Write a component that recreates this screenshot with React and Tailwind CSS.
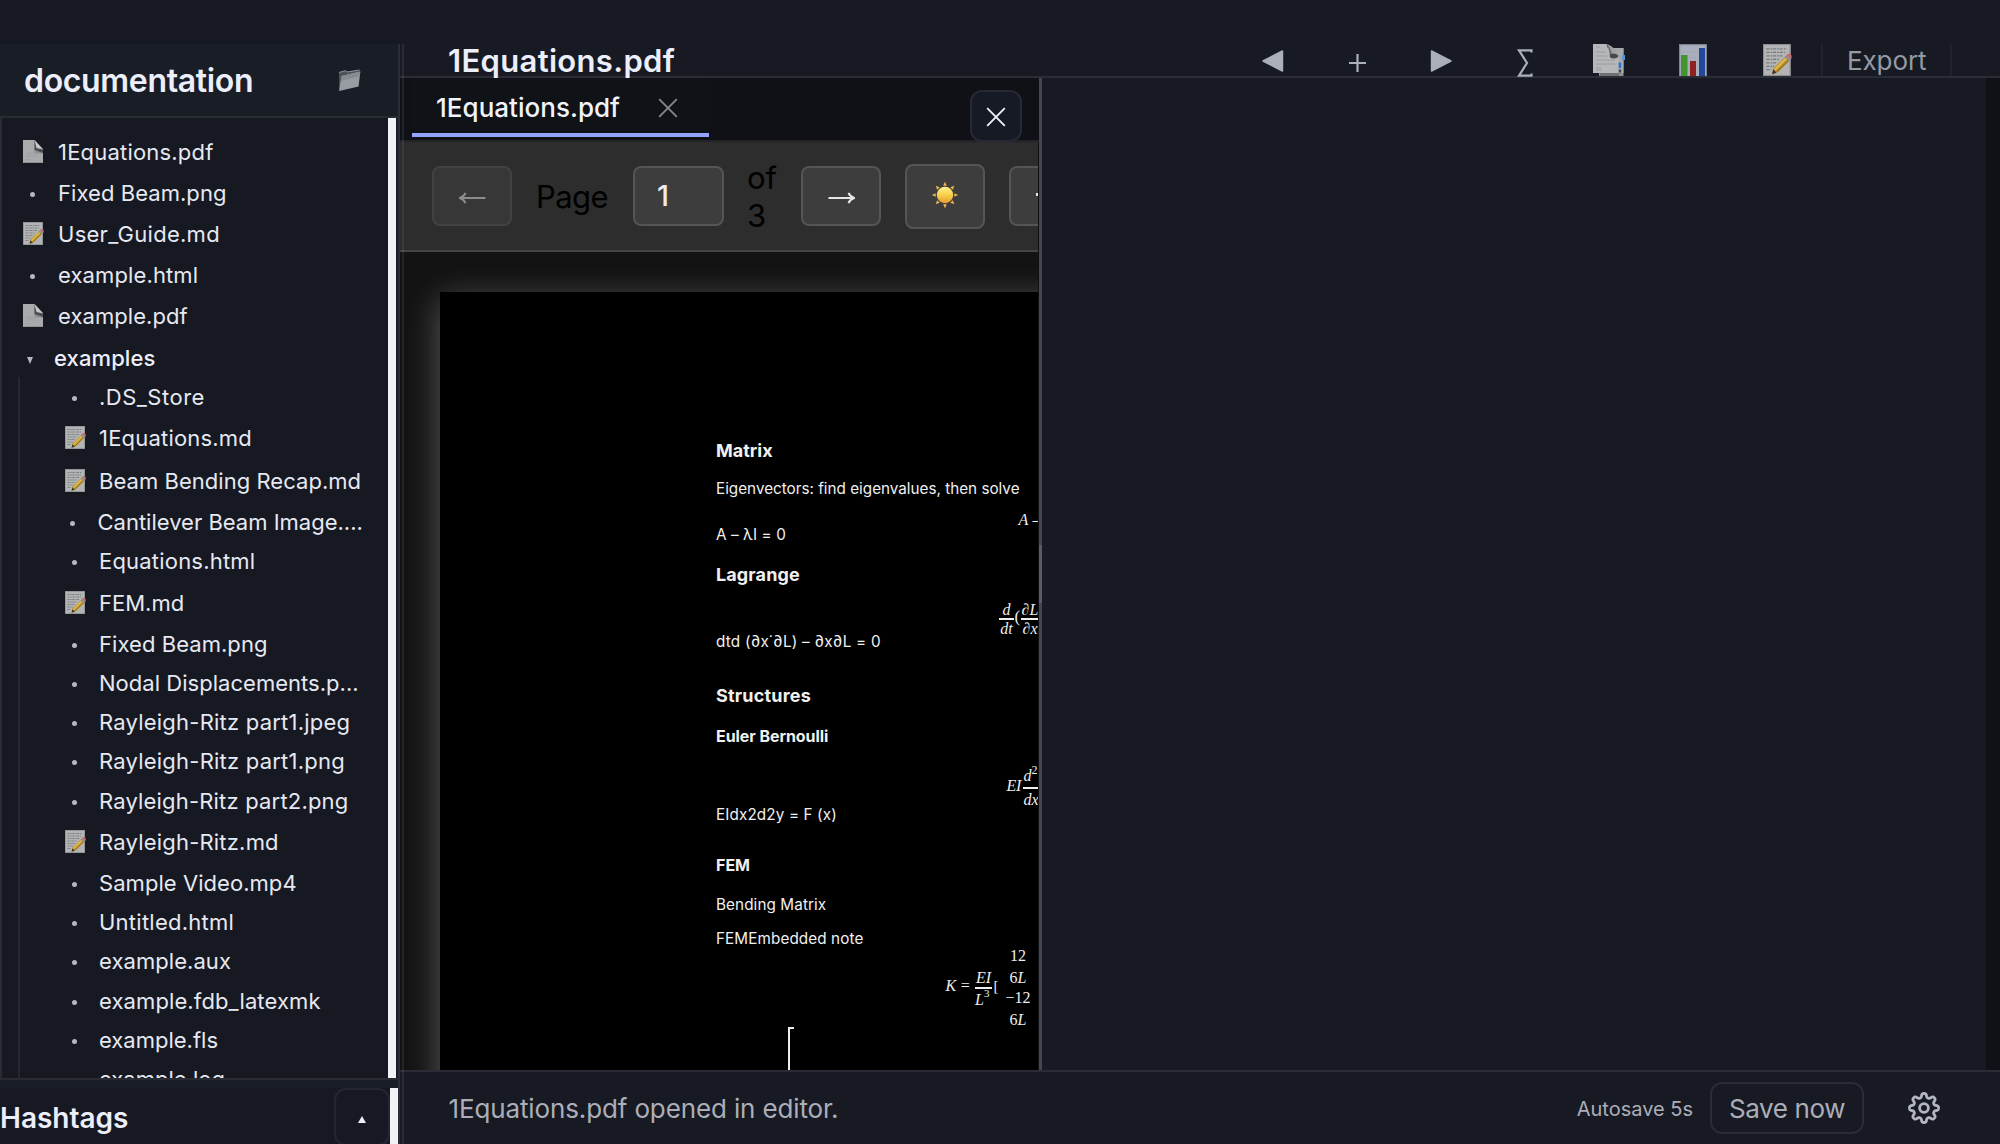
import React from 'react';

const files = [
  { name: '1Equations.pdf', icon: 'doc', row: 'h-[41px]', ls: 'tracking-[0.2px]' },
  { name: 'Fixed Beam.png', row: 'h-[41px]', ls: 'tracking-[0.06px]' },
  { name: 'User_Guide.md', icon: 'memo', row: 'h-[41px]', ls: 'tracking-[0.27px]' },
  { name: 'example.html', row: 'h-[41px]', ls: 'tracking-[0.12px]' },
  { name: 'example.pdf', icon: 'doc', row: 'h-[42px]', ls: 'tracking-[0.06px]' },
];

const examples = [
  { name: '.DS_Store', row: 'h-[41px]', ls: 'tracking-[0.5px]' },
  { name: '1Equations.md', icon: 'memo', row: 'h-[43px]', ls: 'tracking-[0.2px]' },
  { name: 'Beam Bending Recap.md', icon: 'memo', row: 'h-[41px]', ls: 'tracking-[0.04px]' },
  { name: 'Cantilever Beam Image....', row: 'h-[39px]', ls: 'tracking-[0px]', shift: true },
  { name: 'Equations.html', row: 'h-[42px]', ls: 'tracking-[0.2px]' },
  { name: 'FEM.md', icon: 'memo', row: 'h-[41px]', ls: 'tracking-[0px]' },
  { name: 'Fixed Beam.png', row: 'h-[39px]', ls: 'tracking-[0.06px]' },
  { name: 'Nodal Displacements.p...', row: 'h-[39px]', ls: 'tracking-[0.03px]' },
  { name: 'Rayleigh-Ritz part1.jpeg', row: 'h-[39px]', ls: 'tracking-[0.22px]' },
  { name: 'Rayleigh-Ritz part1.png', row: 'h-[40px]', ls: 'tracking-[0.22px]' },
  { name: 'Rayleigh-Ritz part2.png', row: 'h-[41px]', ls: 'tracking-[0.18px]' },
  { name: 'Rayleigh-Ritz.md', icon: 'memo', row: 'h-[41px]', ls: 'tracking-[0.2px]' },
  { name: 'Sample Video.mp4', row: 'h-[39px]', ls: 'tracking-[0.05px]' },
  { name: 'Untitled.html', row: 'h-[39px]', ls: 'tracking-[0.25px]' },
  { name: 'example.aux', row: 'h-[40px]', ls: 'tracking-[0.06px]' },
  { name: 'example.fdb_latexmk', row: 'h-[39px]', ls: 'tracking-[0.11px]' },
  { name: 'example.fls', row: 'h-[39px]', ls: 'tracking-[0px]' },
  { name: 'example.log', row: 'h-[40px]', ls: 'tracking-[0px]' },
];

function DocIcon() {
  return (
    <svg width="20" height="23" viewBox="0 0 20 23">
      <path d="M0 0H11.5L20 9V23H0Z" fill="#a9aaac" />
      <path d="M0.5 22.5H19.5" stroke="#8f9092" />
      <path d="M11.5 3V13.5H20V10Z" fill="#8f9092" />
      <path d="M11.5 0L20 9.5V13L11.5 10Z" fill="#4b4d50" />
      <path d="M11.5 0L20 9.5L13.5 8Z" fill="#c6c7c9" />
      <path d="M3 13.5H16M3 16H15M3 19.5H7" stroke="#9b9c9e" strokeWidth="0.8" />
    </svg>
  );
}

function MemoIcon({ width = 21, height = 23 }) {
  return (
    <svg width={width} height={height} viewBox="0 0 21 23" preserveAspectRatio="none">
      <rect x="0" y="0" width="20" height="23" fill="#b3b4b5" />
      <rect x="0.4" y="0.4" width="19.2" height="22.2" fill="none" stroke="#8e8f91" strokeWidth="0.8" />
      <path
        d="M2.5 3.5H17M2.5 6H16M2.5 8.5H14M2.5 11H12M2.5 13.5H10M2.5 16H8M2.5 18.5H6"
        stroke="#77787a"
        strokeWidth="0.9"
        strokeDasharray="2.2 0.8 1.2 0.6"
      />
      <path d="M6.5 21.7L7.7 17.2L16 9L19.2 12L11 20.2Z" fill="#c39b34" />
      <path d="M8.5 18.6L17 10" stroke="#e0be58" strokeWidth="1.1" />
      <path d="M9.8 20.2L18.6 11.6" stroke="#8f6a1d" strokeWidth="0.9" />
      <path d="M6.5 21.7L7.5 18.2L9.8 20.7Z" fill="#3c3328" />
      <path d="M15.4 9.4L17 7.9L20.3 11L18.8 12.5Z" fill="#8d9096" />
      <path d="M17 7.9Q18.2 6.6 20 7.2Q21.4 8.6 20.3 11Z" fill="#c3686b" />
    </svg>
  );
}

function FolderIcon() {
  return (
    <svg width="23" height="23" viewBox="0 0 23 23">
      <path d="M1 3.5L7.5 1.6L9 3L21 0.8L22 2.5L20 14L1 21Z" fill="#4d5259" />
      <path d="M1 3.5L7.5 1.6L9 3L21.5 1" fill="none" stroke="#8b9299" strokeWidth="1" />
      <path d="M3.5 7L22.3 2.6L20.6 17.4L1.2 22Z" fill="#989ca2" />
      <path d="M3.5 7L22.3 2.6L21.8 7L3 12Z" fill="#868b92" />
    </svg>
  );
}

function TabsIcon() {
  return (
    <svg width="33" height="32" viewBox="0 0 33 32">
      <rect x="6" y="4" width="24.5" height="28" fill="#8d8f91" />
      <path d="M7 30.5H26" stroke="#6f7072" strokeWidth="3" />
      <path d="M16 4H30.5V29H25Z" fill="#a6a8aa" />
      <path d="M0 0H13.5L17 10L25.5 14V29H0Z" fill="#b6b7b8" />
      <path d="M13.5 0Q16 3 16.8 10Q21 8.5 25 11Q22.5 4.5 17 1.5Q15 0.4 13.5 0Z" fill="#a0a2a4" />
      <path d="M13.5 0Q16 3 16.8 10L18.6 9.6Q18 3.5 13.5 0Z" fill="#6a6c6f" />
      <path d="M16.8 10Q22 8.4 25.3 11.5Q25 14.4 21 14.6Q18 14.6 16.8 13Z" fill="#47494c" />
      <path d="M3 3H7M3 8H13M3 12H14M3 16H22M3 20H22M3 24H8M3 26H9" stroke="#989a9c" strokeWidth="0.9" />
      <rect x="29" y="11" width="3" height="5" fill="#5d93d6" />
      <rect x="25.7" y="18.5" width="2.4" height="5.5" fill="#2f6fd0" />
      <rect x="25.7" y="25.5" width="2.4" height="3" fill="#3d4553" />
    </svg>
  );
}

function ChartIcon() {
  return (
    <svg width="28" height="32" viewBox="0 0 28 32">
      <rect width="28" height="32" fill="#a9b0bd" />
      <rect x="0.6" y="0.6" width="26.8" height="32" fill="none" stroke="#7f858f" strokeWidth="1.2" />
      <path d="M2 8H26M2 14H26M2 20H26M2 26H26" stroke="#9da5b2" strokeWidth="0.7" />
      <rect x="2" y="11" width="6.5" height="21" fill="#43942f" />
      <rect x="11" y="17" width="6" height="15" fill="#8f2220" />
      <rect x="20" y="4" width="6" height="28" fill="#23489a" />
    </svg>
  );
}

function SunIcon() {
  return (
    <svg width="28" height="28" viewBox="-14 -14 28 28">
      <defs>
        <linearGradient id="sun" x1="0" y1="0" x2="0" y2="1">
          <stop offset="0" stopColor="#fdf08a" />
          <stop offset="0.5" stopColor="#f6cf4a" />
          <stop offset="1" stopColor="#ea9a33" />
        </linearGradient>
      </defs>
      {[0, 45, 90, 135, 180, 225, 270, 315].map((a) => (
        <path key={a} d="M-1.8 -9.3L0 -13.2L1.8 -9.3Z" fill="#f0b44a" transform={`rotate(${a})`} />
      ))}
      <circle r="8.2" fill="url(#sun)" />
    </svg>
  );
}

function Cross({ color }) {
  return (
    <svg width="20" height="20" viewBox="0 0 20 20">
      <path d="M1.2 1.2L18.8 18.8M18.8 1.2L1.2 18.8" stroke={color} strokeWidth="1.9" fill="none" />
    </svg>
  );
}

function Arrow({ color, flip }) {
  return (
    <svg width="27" height="12" viewBox="0 0 27 12" className={flip ? 'rotate-180' : ''}>
      <path d="M0.5 6H25" stroke={color} strokeWidth="2" />
      <path d="M20.5 0.9Q22 4.6 26.2 6Q22 7.4 20.5 11.1" stroke={color} strokeWidth="2" fill="none" />
    </svg>
  );
}

const gearPath = (() => {
  const pts = [];
  for (let i = 0; i < 240; i++) {
    const t = (i / 240) * Math.PI * 2;
    const r = 12.6 + (1.9 * Math.tanh(1.8 * Math.cos(8 * t))) / Math.tanh(1.8);
    pts.push(`${(r * Math.cos(t)).toFixed(2)} ${(r * Math.sin(t)).toFixed(2)}`);
  }
  return `M${pts.join('L')}Z`;
})();

function Gear() {
  return (
    <svg width="34" height="34" viewBox="-17 -17 34 34">
      <path d={gearPath} fill="none" stroke="#b3b6bf" strokeWidth="2.8" strokeLinejoin="round" />
      <circle r="4.4" fill="none" stroke="#b3b6bf" strokeWidth="2.8" />
    </svg>
  );
}

function FileRow({ file, nested }) {
  const pad = nested ? (file.shift ? 'pl-[59.5px]' : 'pl-[61px]') : 'pl-[20px]';
  return (
    <div className={`${file.row} ${pad} flex shrink-0 items-start`}>
      <div className="flex h-10 w-9 shrink-0 items-start">
        {file.icon === 'doc' && <div className="pt-2 pl-[0.5px]"><DocIcon /></div>}
        {file.icon === 'memo' && <div className={nested ? 'pt-2 pl-[1.5px]' : 'pt-2 pl-[0.5px]'}><MemoIcon /></div>}
        {!file.icon && (
          <div
            className={`mt-[19px] size-[5px] rounded-full bg-[#b4b7bf] ${nested ? 'ml-[8.5px]' : 'ml-[7.5px]'}`}
          />
        )}
      </div>
      <span className={`${file.ls} text-[22px] leading-10 whitespace-nowrap text-[#e6e8f2]`}>{file.name}</span>
    </div>
  );
}

function Sidebar() {
  return (
    <aside className="flex w-[400px] shrink-0 flex-col border-r-2 border-[#292e37] bg-[#191d26]">
      <div className="flex h-[74px] shrink-0 items-center justify-between border-b-2 border-[#292b33] pr-[37px] pl-6">
        <h1 className="pt-[2px] text-[32px] leading-none font-semibold tracking-[-0.33px] text-[#eceefb]">
          documentation
        </h1>
        <FolderIcon />
      </div>
      <div className="flex h-[962px] shrink-0 border-b-2 border-l-2 border-[#292b33]">
        <div className="flex w-[386px] flex-col overflow-hidden bg-[#161922] pt-[14px]">
          {files.map((f) => <FileRow key={f.name} file={f} />)}
          <div className="flex h-[39px] shrink-0 items-start pl-[25px]">
            <svg width="6" height="7" viewBox="0 0 6 7" className="mt-[18.5px]">
              <path d="M0 0H6L3 7Z" fill="#b4b7bf" />
            </svg>
            <span className="pl-[21px] text-[22px] leading-10 font-medium tracking-[0.1px] text-[#eceefb]">examples</span>
          </div>
          <div className="ml-4 flex flex-col border-l-2 border-[#262830]">
            <div className="-ml-[18px] flex flex-col">
              {examples.map((f) => <FileRow key={f.name} file={f} nested />)}
            </div>
          </div>
        </div>
        <div className="w-2 bg-[#f1f2f5]" />
      </div>
      <div className="mt-2 flex min-h-0 flex-1 bg-[#171922]">
        <div className="flex w-[390px] items-start justify-between overflow-hidden">
          <h2 className="pt-[13px] text-[28px] leading-[34px] font-semibold text-[#eceefb]">Hashtags</h2>
          <div className="flex h-[58px] w-14 shrink-0 items-center justify-center rounded-xl border-2 border-[#24272f]">
            <svg width="8" height="7" viewBox="0 0 8 7" className="mt-1">
              <path d="M4 0L8 7H0Z" fill="#eceefb" />
            </svg>
          </div>
        </div>
        <div className="w-2 bg-[#f1f2f5]" />
      </div>
    </aside>
  );
}

function TopBar() {
  return (
    <header className="flex h-[34px] shrink-0 items-center border-b-2 border-[#2a2d36] bg-[#171a23] pl-12">
      <div className="w-[783px] shrink-0 pt-[2px] text-[31px] leading-[32px] font-semibold tracking-[0.33px] text-[#eceefb]">
        1Equations.pdf
      </div>
      <div className="flex h-8 items-center">
        <div className="flex w-[84px] justify-center pt-[2px]">
          <svg width="22" height="22" viewBox="0 0 21 21">
            <path d="M19.5 1V20L1 10.5Z" fill="#abafb9" stroke="#abafb9" strokeWidth="1.5" strokeLinejoin="round" />
          </svg>
        </div>
        <div className="flex w-[84px] justify-center pt-[5px]">
          <svg width="17" height="18" viewBox="0 0 17 18">
            <path d="M0 9H17M8.5 0V18" stroke="#abafb9" strokeWidth="2.2" />
          </svg>
        </div>
        <div className="flex w-[84px] justify-center pt-[2px]">
          <svg width="22" height="22" viewBox="0 0 21 21">
            <path d="M1.5 1V20L20 10.5Z" fill="#abafb9" stroke="#abafb9" strokeWidth="1.5" strokeLinejoin="round" />
          </svg>
        </div>
        <div className="flex w-[84px] justify-center pt-[6px]">
          <svg width="16" height="28" viewBox="0 0 16 28">
            <path d="M14.5 3.5V1.4H2L10 14L2 26.6H14.5V24.5" fill="none" stroke="#abafb9" strokeWidth="2.2" />
          </svg>
        </div>
        <div className="flex w-[84px] justify-center"><TabsIcon /></div>
        <div className="flex w-[84px] justify-center"><ChartIcon /></div>
        <div className="flex w-[84px] justify-center"><MemoIcon width={29} height={32} /></div>
      </div>
      <div className="ml-[2px] flex h-8 w-[131px] items-center border-x-2 border-[#20232c] pt-[2px] pl-[24px] text-[26px] leading-none tracking-[-0.1px] text-[#9599a4]">
        Export
      </div>
    </header>
  );
}

function Frac({ top, bottom, className }) {
  return (
    <div className={`absolute flex flex-col items-center ${className}`}>
      <span className="h-[17px] leading-[18px]">{top}</span>
      <span className="h-[1.5px] w-full bg-[#eee]" />
      <span className="h-[18px] leading-[18px]">{bottom}</span>
    </div>
  );
}

function PdfPage() {
  return (
    <div className="relative mt-10 ml-10 h-[1200px] w-[900px] shrink-0 bg-black shadow-[0_8px_32px_rgba(255,255,255,0.3)]">
      <div className="flex flex-col pt-[149px] pl-[276px] text-[15.25px] leading-5 whitespace-nowrap text-[#f0f0f0]">
        <div className="h-[38px] text-lg leading-5 font-bold">Matrix</div>
        <div className="h-[46px]">Eigenvectors: find eigenvalues, then solve</div>
        <div className="h-[40px] tracking-[0.1px]">A – λI = 0</div>
        <div className="h-[67px] text-lg leading-5 font-bold tracking-[0.12px]">Lagrange</div>
        <div className="h-[54px] tracking-[0.22px]">dtd (∂x˙∂L) – ∂x∂L = 0</div>
        <div className="h-[40px] text-lg leading-5 font-bold tracking-[0.2px]">Structures</div>
        <div className="h-[79px] text-base leading-5 font-bold tracking-[-0.07px]">Euler Bernoulli</div>
        <div className="h-[50px] tracking-[0.13px]">EIdx2d2y = F (x)</div>
        <div className="h-[40px] text-base leading-5 font-bold">FEM</div>
        <div className="h-[34px] tracking-[0.1px]">Bending Matrix</div>
        <div className="tracking-[0.1px]">FEMEmbedded note</div>
      </div>
      <div className="absolute inset-0 font-['Liberation_Serif'] text-base leading-5 whitespace-nowrap text-[#eee] italic">
        <div className="absolute top-[218px] left-[578.5px] w-5 tracking-[0.2px]">A –</div>
        <Frac className="top-[309px] left-[559px] w-[15px]" top="d" bottom="dt" />
        <span className="absolute top-[315px] left-[574.5px] text-[17px] not-italic">(</span>
        <Frac className="top-[309px] left-[581px] w-[18px]" top="∂L" bottom="∂x" />
        <div className="absolute top-[484px] left-[566.5px] tracking-[-0.3px]">EI</div>
        <div className="absolute top-[474px] left-[583.5px]">
          d<sup className="relative -top-[7px] align-baseline text-[12px] leading-none not-italic">2</sup>
        </div>
        <div className="absolute top-[495px] left-[583px] h-[1.5px] w-[28px] bg-[#eee]" />
        <div className="absolute top-[498px] left-[583.5px]">dx</div>
        <div className="absolute top-[684px] left-[505.5px]">K <span className="-ml-[0.5px]">=</span></div>
        <div className="absolute top-[676px] left-[536px]">EI</div>
        <div className="absolute top-[695px] left-[535px] h-[1.5px] w-[17px] bg-[#eee]" />
        <div className="absolute top-[698px] left-[535px]">
          L<sup className="relative -top-[8px] align-baseline text-[11px] leading-none not-italic">3</sup>
        </div>
        <span className="absolute top-[684px] left-[553.5px] text-[15px] not-italic">[</span>
        <div className="absolute top-[654px] left-[565px] flex w-[26px] flex-col items-center not-italic">
          <span className="h-[22px]">12</span>
          <span className="h-[20px]">6<i>L</i></span>
          <span className="h-[22px]">−12</span>
          <span>6<i>L</i></span>
        </div>
        <div className="absolute top-[735px] left-[348px] h-[200px] w-[6px] border-t-2 border-l-2 border-[#eee]" />
      </div>
    </div>
  );
}

function PdfToolbar() {
  const btn = 'flex h-[60px] w-20 shrink-0 items-center justify-center rounded-lg border-2';
  return (
    <div className="flex h-[110px] w-[638px] shrink-0 items-center gap-6 overflow-hidden border-b-2 border-[#444444] bg-[#2d2d2d] pl-8 text-[31px] text-black">
      <div className={`${btn} border-[#424242] bg-[#373737]`}><div className="pt-1"><Arrow color="#8b8b8b" flip /></div></div>
      <div className="w-[73px] shrink-0 pt-[2px] leading-[38px] tracking-[-0.6px]">Page</div>
      <div className="flex h-[60px] w-[91px] shrink-0 items-center rounded-lg border-2 border-[#555555] bg-[#3d3d3d] pb-[1px] pl-[22px] text-[29px] font-medium text-[#ececec]">
        1
      </div>
      <div className="-ml-[1px] w-[30px] shrink-0 pt-[2px] leading-[38px]">of<br />3</div>
      <div className={`${btn} border-[#555555] bg-[#3d3d3d]`}><div className="pt-1"><Arrow color="#e8e6ea" /></div></div>
      <div className="flex h-[65px] w-20 shrink-0 items-center justify-center rounded-lg border-2 border-[#555555] bg-[#3d3d3d] pb-[2px]">
        <SunIcon />
      </div>
      <div className="flex h-[60px] w-20 shrink-0 items-center rounded-lg border-2 border-[#555555] bg-[#3d3d3d] pb-1 pl-[25px]">
        <div className="h-[3px] w-5 bg-[#e8e6ea]" />
      </div>
    </div>
  );
}

export default function App() {
  return (
    <div className="flex h-[1144px] w-[2000px] flex-col overflow-hidden bg-[#161922] font-['Inter',sans-serif]">
      <div className="h-11 shrink-0" />
      <div className="relative flex min-h-0 flex-1">
        <Sidebar />
        <main className="flex min-w-0 flex-1 flex-col">
          <TopBar />
          <div className="flex min-h-0 flex-1 bg-[#171a23]">
            <section className="flex w-[639px] shrink-0 flex-col overflow-hidden bg-[#101116]">
              <div className="relative flex h-16 shrink-0 border-b-2 border-[#232327] pl-3">
                <div className="flex h-[59px] w-[297px] items-start border-b-4 border-[#94a3fb] bg-[#0f1217] pl-6">
                  <span className="pt-[14px] text-[26px] leading-8 font-medium tracking-[0.03px] text-[#f1f3fb]">
                    1Equations.pdf
                  </span>
                  <div className="pt-5 pl-[38px]"><Cross color="#85868a" /></div>
                </div>
                <div className="absolute top-3 left-[570px] z-10 flex h-[52px] w-[52px] items-center justify-center rounded-xl border-2 border-[#272a35] bg-[#161a24] pt-[2px]">
                  <Cross color="#eef0f8" />
                </div>
              </div>
              <PdfToolbar />
              <div className="flex min-h-0 w-[638px] flex-1 items-start overflow-hidden bg-[#131313]">
                <PdfPage />
              </div>
            </section>
            <div className="flex w-[3px] shrink-0 flex-col bg-[#44464d] pt-[467px]">
              <div className="h-[58px] bg-[#5b5c63]" />
            </div>
            <div className="flex-1" />
            <div className="w-[14px] bg-[#101116]" />
          </div>
          <footer className="flex h-[74px] shrink-0 items-center border-t-2 border-[#292c34] bg-[#171a23] pr-[59px] pl-[48.5px] text-[26px] text-[#abaeb8]">
            <span className="flex-1 pt-[1px] tracking-[-0.13px]">1Equations.pdf opened in editor.</span>
            <span className="pt-[2px] pr-[17px] text-xl">Autosave 5s</span>
            <div className="flex h-[52px] w-[154px] items-center justify-center rounded-xl border-2 border-[#292c34] pt-[1px] tracking-[-0.38px]">
              Save now
            </div>
            <div className="pl-[43px]"><Gear /></div>
          </footer>
        </main>
        <div className="absolute inset-y-0 left-[402px] w-[2px] bg-[#8a90a0]/15" />
      </div>
    </div>
  );
}
